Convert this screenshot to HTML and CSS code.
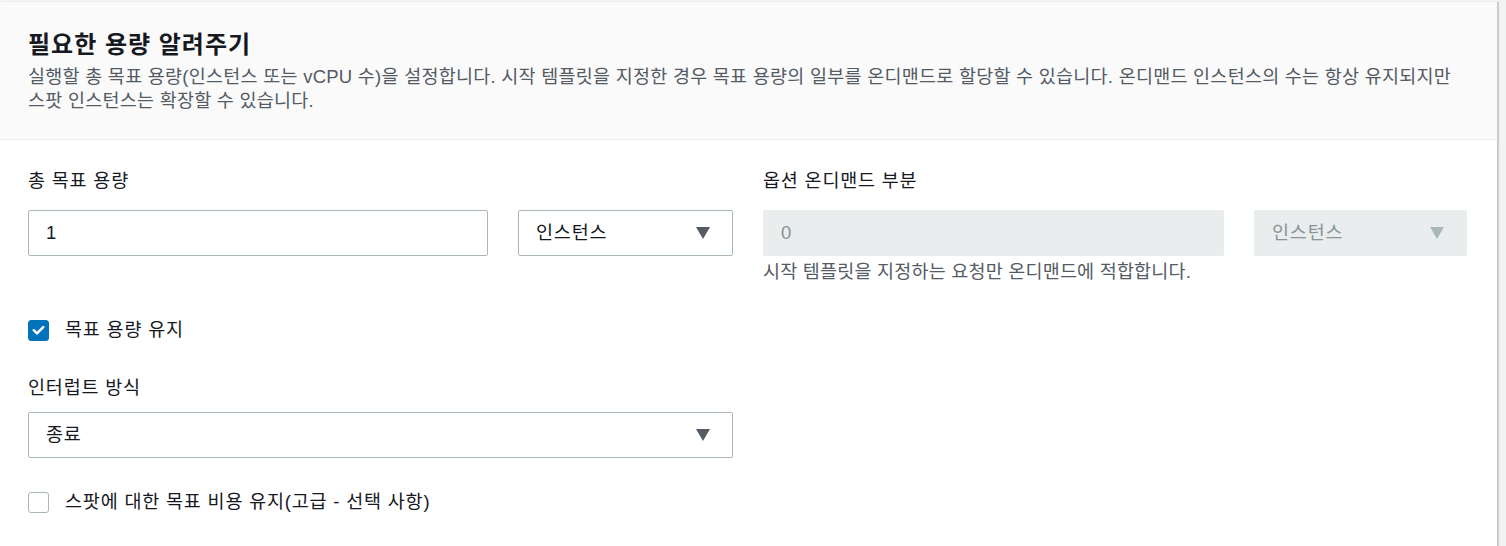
FILE: index.html
```html
<!DOCTYPE html>
<html lang="ko">
<head>
<meta charset="utf-8">
<link rel="stylesheet" href="styles.css">
</head>
<body>
<div class="card">
  <div class="card-header">
    <h2 class="title">필요한 용량 알려주기</h2>
    <p class="desc">실행할 총 목표 용량(인스턴스 또는 vCPU 수)을 설정합니다. 시작 템플릿을 지정한 경우 목표 용량의 일부를 온디맨드로 할당할 수 있습니다. 온디맨드 인스턴스의 수는 항상 유지되지만 스팟 인스턴스는 확장할 수 있습니다.</p>
  </div>
  <div class="card-body">
    <div class="columns">
      <div class="field">
        <div class="label">총 목표 용량</div>
        <div class="control-row">
          <div class="input">1</div>
          <div class="select select-small"><span>인스턴스</span><span class="caret"></span></div>
        </div>
      </div>
      <div class="field">
        <div class="label">옵션 온디맨드 부분</div>
        <div class="control-row">
          <div class="input disabled">0</div>
          <div class="select select-small select-narrow disabled"><span>인스턴스</span><span class="caret"></span></div>
        </div>
        <div class="helper">시작 템플릿을 지정하는 요청만 온디맨드에 적합합니다.</div>
      </div>
    </div>

    <div class="check-row check-first">
      <span class="checkbox checked">
        <svg viewBox="0 0 20 20" width="20" height="20"><path d="M5 10.2l3.4 3.4L15 7" fill="none" stroke="#fff" stroke-width="2.6" stroke-linecap="round" stroke-linejoin="round"/></svg>
      </span>
      <span class="check-label">목표 용량 유지</span>
    </div>

    <div class="field half field-interrupt">
      <div class="label">인터럽트 방식</div>
      <div class="select"><span>종료</span><span class="caret"></span></div>
    </div>

    <div class="check-row check-last">
      <span class="checkbox"></span>
      <span class="check-label">스팟에 대한 목표 비용 유지(고급 - 선택 사항)</span>
    </div>
  </div>
</div>
</body>
</html>
```

FILE: styles.css
```css
* { box-sizing: border-box; }

html, body {
  margin: 0;
  padding: 0;
}

body {
  background: #f2f3f3;
  font-family: "Liberation Sans", "Noto Sans CJK KR", sans-serif;
  color: #16191f;
  width: 1506px;
  height: 546px;
  overflow: hidden;
  word-break: keep-all;
}

.card {
  margin-top: 2px;
  width: 1498px;
  height: 544px;
  background: #ffffff;
  border-right: 1px solid #c4caca;
  box-shadow: 1px 0 1px rgba(0, 28, 36, 0.15);
}

.card-header {
  background: #fafafa;
  border-bottom: 1px solid #eaeded;
  padding: 28px 28px 26px 28px;
}

.title {
  margin: 0;
  font-size: 24px;
  line-height: 30px;
  font-weight: 700;
  letter-spacing: 1px;
  color: #16191f;
}

.desc {
  margin: 5px 0 0 0;
  font-size: 18.5px;
  line-height: 24px;
  letter-spacing: 0.25px;
  color: #545b64;
}

.card-body {
  padding: 29px 31px 0 28px;
}

.columns {
  display: grid;
  grid-template-columns: 705px 704px;
  column-gap: 30px;
}

.label {
  font-size: 18.5px;
  line-height: 24px;
  letter-spacing: 0.8px;
  color: #16191f;
  margin-bottom: 17px;
}

.control-row {
  display: flex;
  gap: 30px;
}

.input,
.select {
  height: 46px;
  border: 1px solid #aab7b8;
  border-radius: 2px;
  background: #ffffff;
  font-size: 18.5px;
  line-height: 44px;
  letter-spacing: 0.8px;
  color: #16191f;
}

.input {
  flex: 1;
  padding-left: 17px;
}

.select {
  display: flex;
  align-items: center;
  justify-content: space-between;
  padding: 0 22px 0 17px;
}

.select-small {
  width: 215px;
  flex: none;
}

.select-narrow {
  width: 213px;
}

.caret {
  width: 0;
  height: 0;
  border-left: 7px solid transparent;
  border-right: 7px solid transparent;
  border-top: 12px solid #545b64;
}

.disabled {
  background: #eaeded;
  border-color: #eaeded;
  color: #879596;
}

.disabled .caret {
  border-top-color: #aab7b8;
}

.helper {
  margin-top: 5px;
  font-size: 18.5px;
  line-height: 22px;
  letter-spacing: 0.2px;
  color: #545b64;
}

.check-row {
  display: flex;
  align-items: center;
  gap: 16px;
  height: 24px;
}

.check-first {
  margin-top: 35px;
}

.check-last {
  margin-top: 32px;
}

.checkbox {
  width: 21px;
  height: 21px;
  border-radius: 3px;
  border: 1px solid #aab7b8;
  background: #fff;
  display: flex;
  align-items: center;
  justify-content: center;
}

.checkbox.checked {
  background: #0073bb;
  border-color: #0073bb;
}

.check-label {
  font-size: 18.5px;
  line-height: 24px;
  letter-spacing: 0.8px;
  color: #16191f;
}

.half {
  width: 705px;
}

.field-interrupt {
  margin-top: 34px;
}

.field-interrupt .label {
  margin-bottom: 12px;
}
```
